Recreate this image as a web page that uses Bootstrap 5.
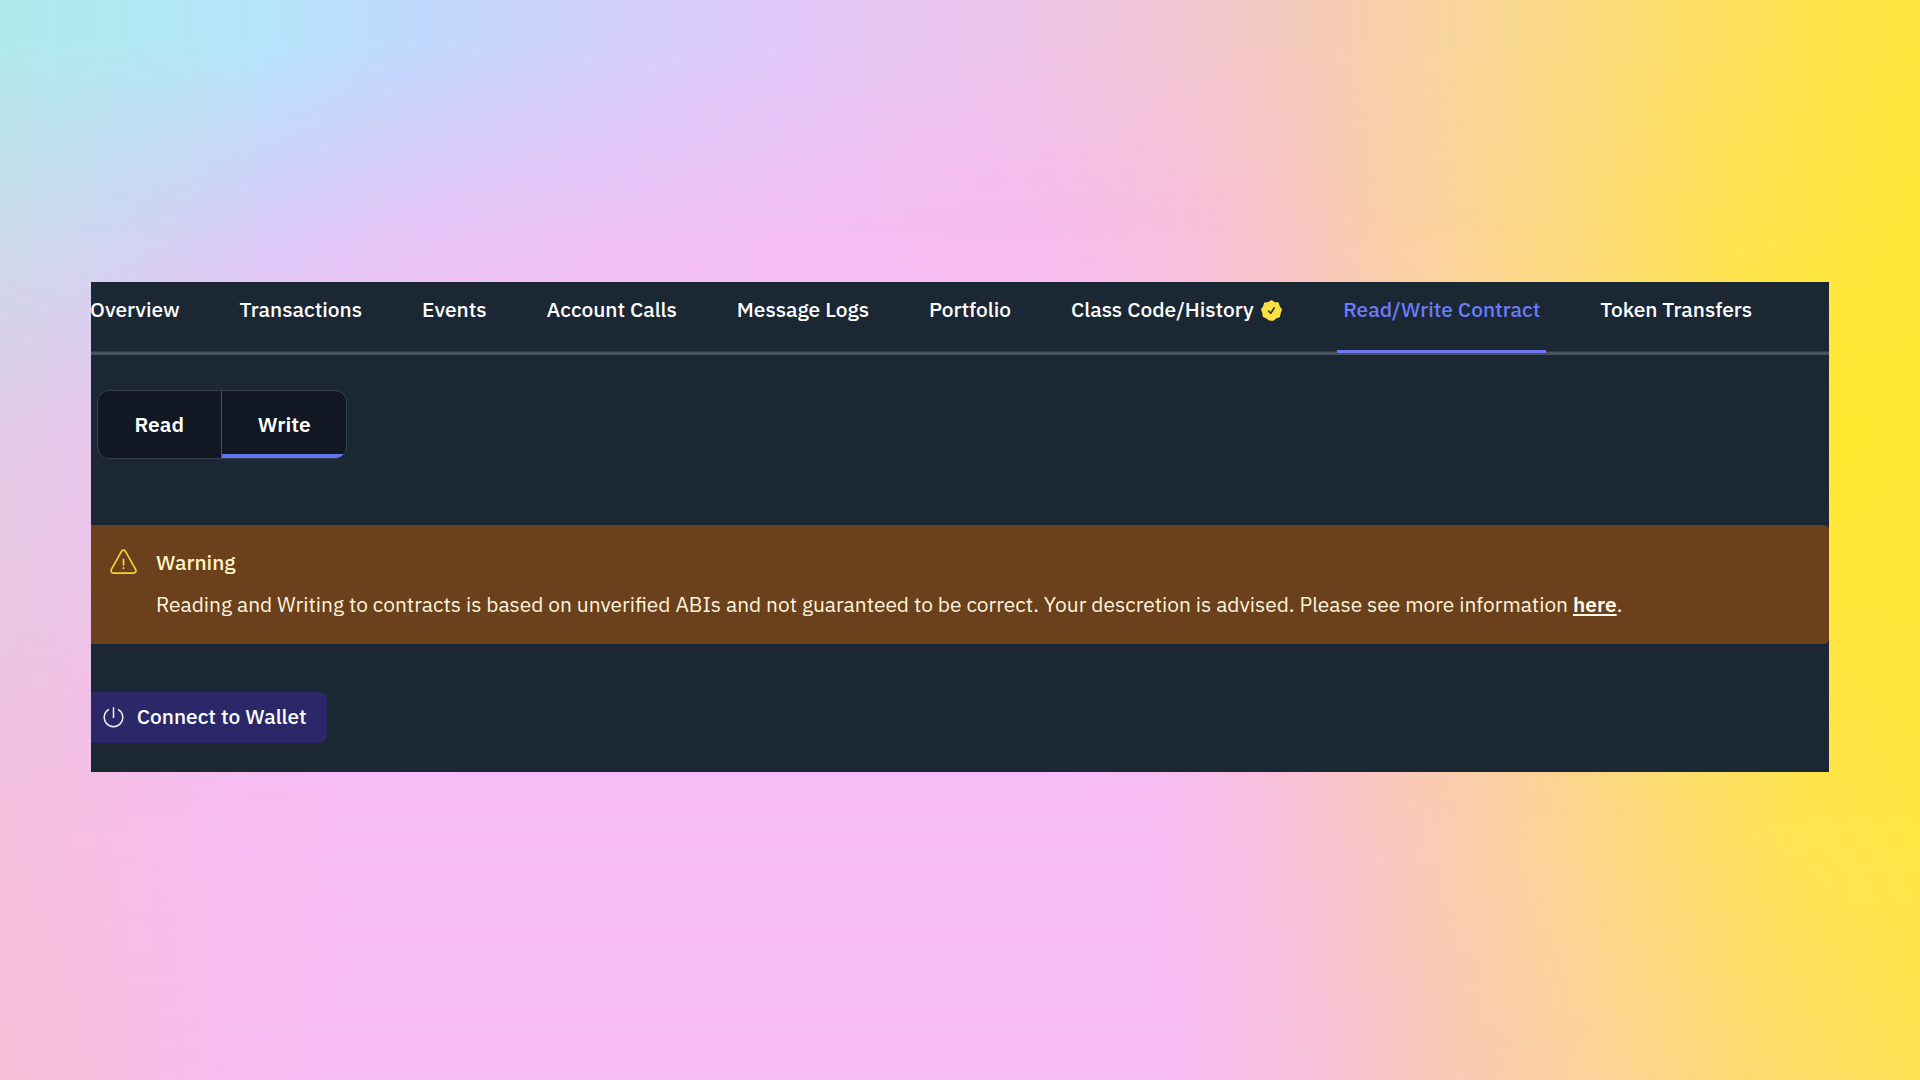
<!DOCTYPE html>
<html lang="en">
<head>
<meta charset="utf-8">
<meta name="viewport" content="width=device-width, initial-scale=1">
<title>Read/Write Contract</title>
<link rel="stylesheet" href="https://cdn.jsdelivr.net/npm/bootstrap@5.3.0/dist/css/bootstrap.min.css">
<style>
body{font-family:"IBM Plex Sans",Roboto,"Liberation Sans",sans-serif;font-size:20.93px;line-height:24px;overflow:hidden;background:#f7bdf5}
.stage{width:1920px;height:1080px;padding:282px 0 0 91px;isolation:isolate}
/* Backdrop: horizontal colour bands that blend into each other downwards */
.wash{position:absolute;inset:0;z-index:-1}
.wash-5{background:linear-gradient(90deg,#f9bfd7 0,#f9bedf 5%,#f7bdf1 12%,#f7bdf5 17%,#f7bdf5 61%,#f9c1d8 69%,#fac9b8 75%,#fcd39a 83%,#fddb72 91%,#ffe254 100%)}
.wash-4{background:linear-gradient(90deg,#f3c0dd 0,#f6bee6 6%,#f7bdf1 12%,#f7bdf5 18%,#f7bdf5 60%,#f8c0df 66%,#fac6c6 71%,#fbd19f 79%,#fddc72 87%,#ffe450 94%,#ffe742 100%);-webkit-mask-image:linear-gradient(#000 820px,transparent 1080px)}
.wash-3{background:linear-gradient(90deg,#e2cbe6 0,#e9c6ee 6%,#f3bff4 13%,#f7bdf5 25%,#f7bdf5 54%,#f8c0dc 62%,#f9c5c6 67%,#fad0a5 74%,#fcdb7d 82%,#ffe448 90%,#ffe92f 96%,#ffe834 100%);-webkit-mask-image:linear-gradient(#000 430px,transparent 820px)}
.wash-2{background:linear-gradient(90deg,#cbdaea 0,#d0d5f3 6%,#dccbf8 14%,#e8c4f6 22%,#f1c0f5 35%,#f5bdf4 45%,#f7bcef 54%,#f8c0dc 62%,#f9c5c6 67%,#fad0a5 73%,#fcdb7d 82%,#ffe352 90%,#ffe837 100%);-webkit-mask-image:linear-gradient(#000 230px,transparent 430px)}
.wash-1{background:linear-gradient(90deg,#afe9ea 0,#b3e5fa 13%,#c0d9fd 22%,#d1d1fb 31%,#e3c8f8 42%,#edc4ec 52%,#f2c6cd 63%,#f6cdb3 70%,#f9d98a 80%,#fddf68 88%,#ffe547 96%,#ffe640 100%);-webkit-mask-image:linear-gradient(#000 40px,transparent 240px)}
.panel{width:1737.5px;height:490px;background:#1b2733;color:#fff;overflow:hidden}
.tabs{height:73px;box-shadow:inset 0 -3.5px #47535f;margin-left:-7px;gap:47.9px;flex-wrap:nowrap}
.tabs .nav-item{flex:none}
.tabs .nav-link{height:71px;padding:16px 6px 0;color:#fff;font-weight:500;white-space:nowrap;line-height:24px}
.tabs .nav-link.active{color:#6a7cf8;border-bottom:3.5px solid #6a78f2}
.verified{width:21px;height:21px;margin:1.5px 1px 0 7.5px;flex:none}
.switcher{width:250px;height:69px;margin:35px 0 0 5.5px;border:1.5px solid #34404b;border-radius:12px;background:#111824;overflow:hidden}
.switcher .btn{border:0;border-radius:0;padding:0;color:#fff;font-size:20.93px;line-height:24px;font-weight:600;flex:1}
.switcher .btn+.btn{border-left:1.5px solid #46525e;box-shadow:inset 0 -4px #6474ec;flex:0 0 124.5px;padding-left:1px}
.notice{height:119.5px;margin:65.5px 0 0;border:0;border-radius:0 5px 5px 0;background:#6b401c;color:#fff4dc;padding:26.5px 0 0 18.5px}
.notice svg{width:27px;height:26px;margin:-2px 19.5px 0 0;flex:none}
.notice h2{font-size:20.93px;line-height:24px;font-weight:500;color:#fff3c4;margin:0 0 18px}
.notice p{white-space:nowrap}
.notice a{color:#fff9ea;font-weight:600;text-decoration-thickness:2px;text-underline-offset:1.5px}
.connect{height:51px;width:236px;margin-top:47.5px;border:0;border-radius:0 8px 8px 0;background:#2b2769!important;color:#fff!important;padding:0 0 0 11.5px;font-size:20.93px;line-height:24px;font-weight:500;white-space:nowrap}
.connect svg{width:21px;height:24px;margin-right:13.3px}
</style>
</head>
<body>
<main class="stage position-relative">
  <div class="wash wash-5"></div><div class="wash wash-4"></div><div class="wash wash-3"></div><div class="wash wash-2"></div><div class="wash wash-1"></div>
  <section class="panel">
    <ul class="nav tabs">
      <li class="nav-item"><a class="nav-link" href="#">Overview</a></li>
      <li class="nav-item"><a class="nav-link" href="#">Transactions</a></li>
      <li class="nav-item"><a class="nav-link" href="#">Events</a></li>
      <li class="nav-item"><a class="nav-link" href="#">Account Calls</a></li>
      <li class="nav-item"><a class="nav-link" href="#">Message Logs</a></li>
      <li class="nav-item"><a class="nav-link" href="#">Portfolio</a></li>
      <li class="nav-item"><a class="nav-link d-flex" href="#">Class Code/History
        <svg class="verified" viewBox="0 0 24 24"><path fill="#fbe046" stroke="#fbe046" stroke-width="2" stroke-linejoin="round" d="M12 1.2 15.4 3.4 19.4 3.7 20.6 7.6 23 11 21.6 14.8 20.8 18.8 17 20.2 13.8 22.8 12 22.8 9.4 22.5 6.4 20.1 3 18.6 2.4 14.6 1 11 3.4 7.6 4.4 3.8 8.4 3.4Z"/><path d="m8.7 12.6 2.4 2.5 4-6" fill="none" stroke="#303438" stroke-width="1.9" stroke-linecap="round" stroke-linejoin="round"/></svg></a></li>
      <li class="nav-item"><a class="nav-link active" href="#">Read/Write Contract</a></li>
      <li class="nav-item"><a class="nav-link" href="#">Token Transfers</a></li>
    </ul>

    <div class="switcher d-flex">
      <button class="btn" type="button">Read</button>
      <button class="btn" type="button">Write</button>
    </div>

    <div class="alert notice d-flex align-items-start" role="alert">
      <svg viewBox="0 0 27 26" fill="none" stroke="#f3d431" stroke-width="1.7" stroke-linecap="round" stroke-linejoin="round"><path d="M11.5 2.3 1.4 20.3c-.9 1.8 0 3.9 2.2 3.9h19.8c2.2 0 3.1-2.1 2.2-3.9L15.5 2.3c-.9-1.6-3.1-1.6-4 0Z"/><path d="M13.5 10.3v5.6M13.5 19v.2" stroke-width="1.8"/></svg>
      <div>
        <h2>Warning</h2>
        <p class="mb-0">Reading and Writing to contracts is based on unverified ABIs and not guaranteed to be correct. Your descretion is advised. Please see more information <a href="#">here</a>.</p>
      </div>
    </div>

    <button class="btn connect d-flex align-items-center" type="button">
      <svg viewBox="0 0 21 24" fill="none" stroke="#f0eefa" stroke-width="1.5" stroke-linecap="round"><path d="M5.4 4.6a9.3 9.3 0 1 0 10.2 0M10.5 2.8v9.6"/></svg>
      <span>Connect to Wallet</span>
    </button>
  </section>
</main>
<script src="https://cdn.jsdelivr.net/npm/bootstrap@5.3.0/dist/js/bootstrap.bundle.min.js"></script>
</body>
</html>
